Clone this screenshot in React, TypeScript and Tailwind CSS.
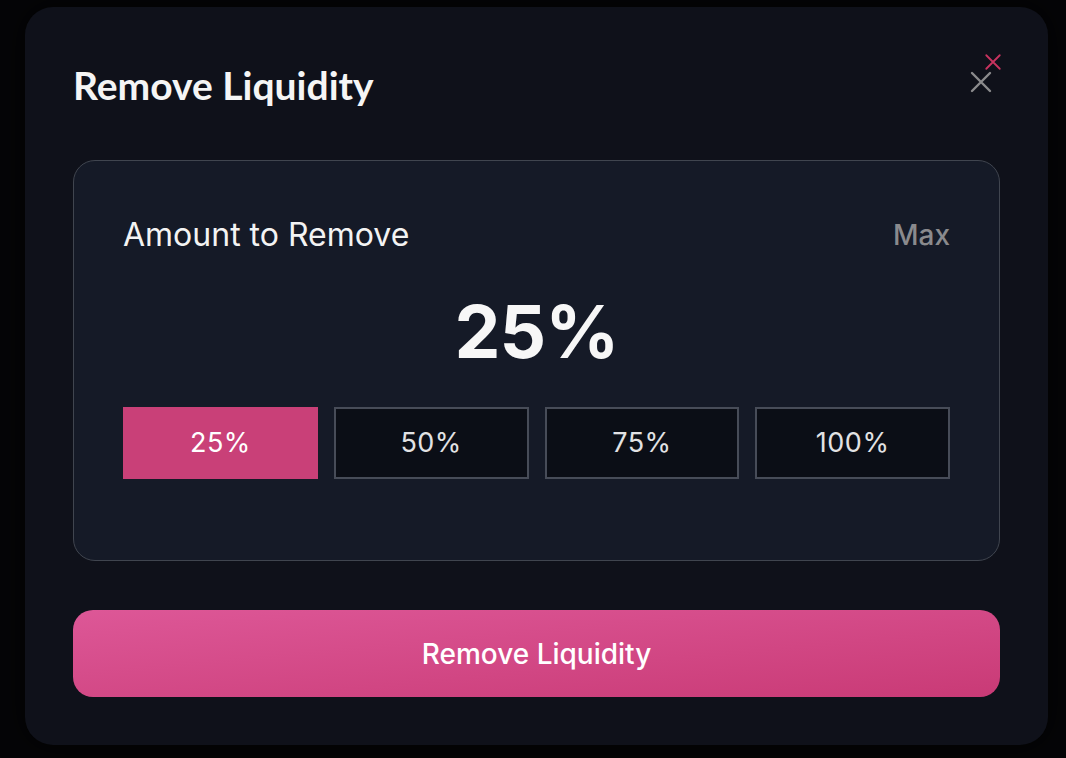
import React from "react";

const options = ["25%", "50%", "75%", "100%"];

const CloseIcon = ({ className, color }: { className: string; color: string }) => (
  <svg className={className} viewBox="0 0 24 24" fill="none" stroke={color} strokeWidth={2.4} strokeLinecap="round">
    <path d="M3 3 L21 21 M21 3 L3 21" />
  </svg>
);

const App: React.FC = () => {
  const selected = "25%";
  return (
    <div className="w-[1066px] h-[758px] bg-[#050507] pl-[25px] pt-[7px] overflow-hidden" style={{ fontFamily: "Inter, 'Noto Sans', sans-serif" }}>
      <div className="relative w-[1023px] h-[738px] rounded-[28px] bg-[#0f111a] shadow-[0_0_30px_rgba(0,0,0,0.8)] px-[48px] pt-[50px]">
        <CloseIcon className="absolute left-[944px] top-[63px] w-[24px] h-[24px]" color="#8b8b8d" />
        <CloseIcon className="absolute left-[959px] top-[46px] w-[18px] h-[18px]" color="#c8335f" />

        <h2 className="text-[39px] leading-[56px] font-bold text-[#f5f5f5]" style={{ fontFamily: "Lato, 'Noto Sans', sans-serif" }}>
          Remove Liquidity
        </h2>

        <div className="mt-[47px] h-[401px] rounded-[22px] border border-[#40454f] bg-[#151a27] px-[49px] pt-[54px]">
          <div className="flex items-center justify-between h-[40px]">
            <span className="text-[32px] text-[#f3f3f3]">Amount to Remove</span>
            <span className="text-[28px] font-medium text-[#8a8a8d]">Max</span>
          </div>
          <div className="mt-[37px] h-[80px] flex items-center justify-center text-[73px] font-bold text-[#f7f7f7] tracking-[-1px]">
            25%
          </div>
          <div className="mt-[35px] grid grid-cols-4 gap-[16px]">
            {options.map((o) =>
              o === selected ? (
                <button key={o} className="h-[72px] bg-[#c94078] text-[27px] tracking-[0.5px] text-white">
                  {o}
                </button>
              ) : (
                <button key={o} className="h-[72px] bg-[#0b0e16] border-2 border-[#474c58] text-[27px] tracking-[0.5px] text-[#e2e2e4]">
                  {o}
                </button>
              )
            )}
          </div>
        </div>

        <button className="mt-[49px] w-full h-[87px] rounded-[20px] bg-gradient-to-br from-[#dd5797] to-[#c93a76] text-[28px] font-medium text-white">
          Remove Liquidity
        </button>
      </div>
    </div>
  );
};

export default App;
